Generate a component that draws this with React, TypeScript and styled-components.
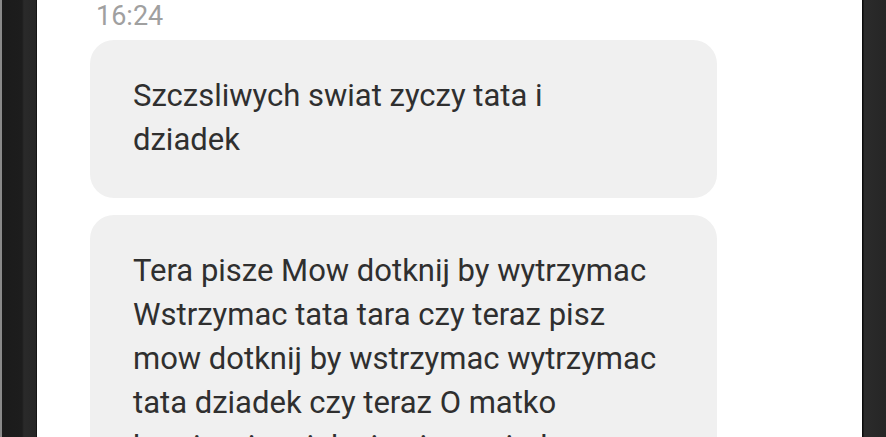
import React, { FC } from 'react';
import styled, { createGlobalStyle } from 'styled-components';

const GlobalStyle = createGlobalStyle`
  html, body {
    margin: 0;
    padding: 0;
    height: 100%;
    overflow: hidden;
    background: #1c1c1c;
  }
`;

const Phone = styled.div`
  display: flex;
  width: 886px;
  height: 437px;
  overflow: hidden;
  background: #1c1c1c;
  border-left: 2px solid #8a8a8a;
  box-sizing: border-box;
`;

const BezelLeft = styled.div`
  width: 35px;
  flex: none;
  background: linear-gradient(90deg, #1b1b1b 0, #1d1d1d 20px, #2a2a2a 22px, #262626 34px, #050505 35px);
`;

const BezelRight = styled.div`
  width: 24px;
  flex: none;
  background: linear-gradient(90deg, #0a0a0a 0, #0a0a0a 1px, #2b2b2b 2px, #262626 24px);
`;

const Screen = styled.div`
  flex: 1;
  background: #ffffff;
  padding: 0 0 0 53px;
  display: flex;
  flex-direction: column;
  font-family: Roboto, 'Liberation Sans', sans-serif;
`;

const Time = styled.div`
  color: #a0a0a0;
  font-size: 27px;
  line-height: 32px;
  padding-left: 6px;
  margin-bottom: 8px;
`;

const Thread = styled.div`
  display: flex;
  flex-direction: column;
  gap: 17px;
`;

const Bubble = styled.div`
  width: 627px;
  box-sizing: border-box;
  background: #f0f0f0;
  border-radius: 24px;
  padding: 34px 20px 36px 43px;
  color: #2f2f2f;
  font-size: 31px;
  line-height: 44px;
`;

const Line = styled.div`
  white-space: nowrap;
`;

const messages: string[][] = [
  ['Szczsliwych swiat zyczy tata i', 'dziadek'],
  [
    'Tera pisze Mow dotknij by wytrzymac',
    'Wstrzymac tata tara czy teraz pisz',
    'mow dotknij by wstrzymac wytrzymac',
    'tata dziadek czy teraz O matko',
    'bo nie wiem jak sie pisze wiadomosc',
  ],
];

const App: FC = () => (
  <>
    <GlobalStyle />
    <Phone>
      <BezelLeft />
      <Screen>
        <Time>16:24</Time>
        <Thread>
          {messages.map((lines, i) => (
            <Bubble key={i}>
              {lines.map((l) => (
                <Line key={l}>{l}</Line>
              ))}
            </Bubble>
          ))}
        </Thread>
      </Screen>
      <BezelRight />
    </Phone>
  </>
);

export default App;
